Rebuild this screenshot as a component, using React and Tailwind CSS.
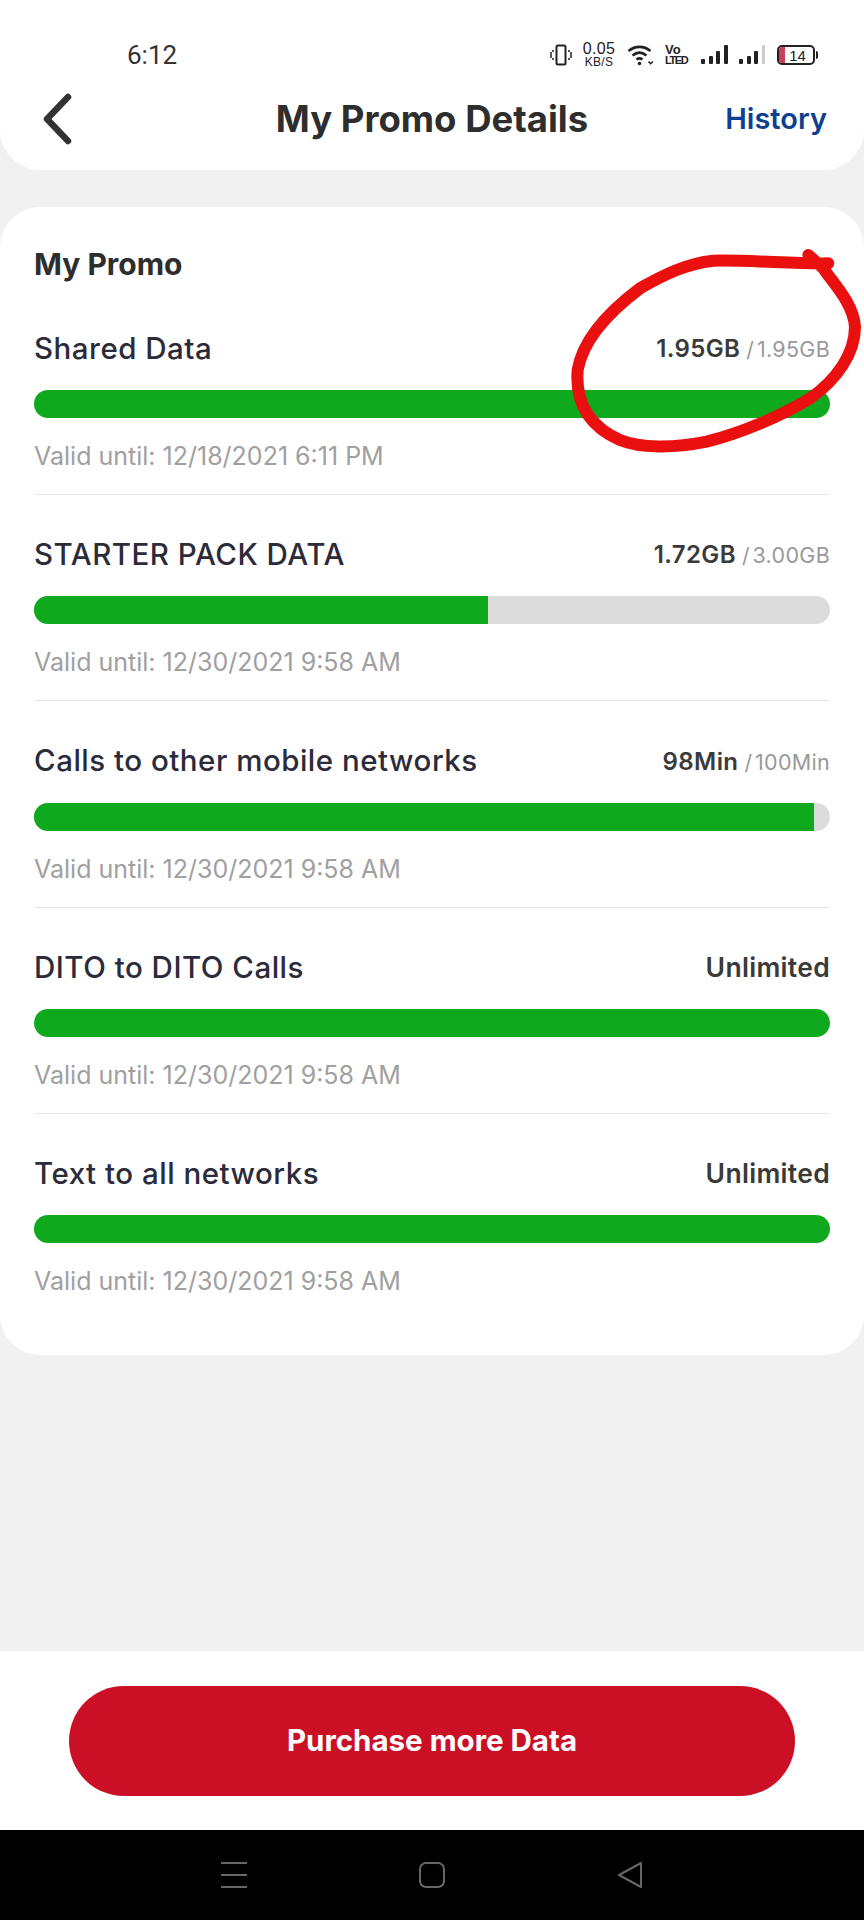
const promos = [
  { name: "Shared Data", used: "1.95GB", total: "1.95GB", pct: 100, valid: "12/18/2021 6:11 PM" },
  { name: "STARTER PACK DATA", used: "1.72GB", total: "3.00GB", pct: 57, valid: "12/30/2021 9:58 AM" },
  { name: "Calls to other mobile networks", used: "98Min", total: "100Min", pct: 98, valid: "12/30/2021 9:58 AM" },
  { name: "DITO to DITO Calls", used: "Unlimited", pct: 100, valid: "12/30/2021 9:58 AM" },
  { name: "Text to all networks", used: "Unlimited", pct: 100, valid: "12/30/2021 9:58 AM" },
];

function Signal({ dim }) {
  return (
    <svg width="27" height="22" viewBox="0 0 27 22" fill="#222">
      <rect x="0" y="15" width="4" height="5" rx="1" />
      <rect x="8" y="12" width="4" height="8" rx="1" />
      <rect x="15" y="7" width="4" height="13" rx="1" />
      <rect x="23" y="1" width={dim ? 3 : 4} height="19" rx="1" fill={dim ? "#ccc" : "#222"} />
    </svg>
  );
}

function StatusIcons() {
  return (
    <div className="flex items-center text-[#222]">
      {/* vibrate */}
      <svg width="22" height="22" viewBox="0 0 22 22" fill="none" stroke="currentColor" className="mr-[10px]">
        <rect x="6.5" y="1.5" width="9" height="19" rx="1.5" strokeWidth="2" />
        <path d="M3 6v2M1 8v6M3 14v2M19 6v2M21 8v6M19 14v2" strokeWidth="1.5" />
      </svg>
      <div className="mr-[11px] flex w-[34px] flex-col items-center font-['Liberation_Sans',sans-serif] leading-none">
        <span className="text-[16px] leading-[15px] tracking-[0.3px]">0.05</span>
        <span className="text-[12px] leading-[13px] tracking-[0.3px]">KB/S</span>
      </div>
      {/* wifi */}
      <svg width="28" height="24" viewBox="0 0 28 24" fill="none" stroke="currentColor" strokeWidth="2.6" className="mr-[10px]">
        <path d="M1.5 8C8 2.5 17 2.5 23.5 8" />
        <path d="M5.5 12.5C10 8.8 15 8.8 19.5 12.5" />
        <path d="M9.5 16.5C11.5 15 13.5 15 15.5 16.5" />
        <circle cx="12.5" cy="20.5" r="1.8" fill="currentColor" stroke="none" />
        <path d="M21.5 18.5l2.2 2.2 2.2-2.2" strokeWidth="1.6" />
      </svg>
      <div className="mr-[12px] flex w-[24px] flex-col font-['Liberation_Sans',sans-serif] font-bold leading-none">
        <span className="text-[13px] leading-[10px]">Vo</span>
        <span className="text-[11px] leading-[11px] tracking-[-1.4px]">LTED</span>
      </div>
      <div className="mr-[11px] flex">
        <Signal />
      </div>
      <div className="mr-[11px] flex">
        <Signal dim />
      </div>
      {/* battery */}
      <div className="flex items-center">
        <div className="relative flex h-[20px] w-[38px] items-center justify-center overflow-hidden rounded-[5px] border-2 border-[#222]">
          <div className="absolute inset-y-0 left-0 w-[6px] bg-[#c8405a]" />
          <span className="relative pl-[3px] font-['Liberation_Sans',sans-serif] text-[15px] font-light leading-none">14</span>
        </div>
        <div className="ml-[1px] h-[8px] w-[2px] rounded-r-sm bg-[#222]" />
      </div>
    </div>
  );
}

function PromoRow({ promo, last }) {
  return (
    <div className={last ? "" : "mb-[41.25px] border-b border-[#e6e6e6] pb-[22px]"}>
      <div className="flex h-[36px] items-center justify-between">
        <span className="text-[29.5px] font-medium tracking-[0.5px] text-[#2b2b3a]">{promo.name}</span>
        {promo.total ? (
          <span className="flex items-baseline pt-[2px]">
            <span className="text-[24px] font-semibold tracking-[0.4px] text-[#3a3a3a]">{promo.used}</span>
            <span className="ml-[6px] mr-[3px] text-[21px] text-[#999]">/</span>
            <span className="text-[21.5px] tracking-[0.3px] text-[#999]">{promo.total}</span>
          </span>
        ) : (
          <span className="pt-[2px] text-[26.5px] font-semibold tracking-[0.3px] text-[#3a3a3a]">{promo.used}</span>
        )}
      </div>
      <div className="mt-[24px] h-[28px] overflow-hidden rounded-full bg-[#dcdcdc]">
        <div className="h-full bg-[#0fa91d]" style={{ width: `${promo.pct}%` }} />
      </div>
      <p className="mt-[22px] h-[32px] text-[25px] leading-[32px] text-[#a0a0a0]">Valid until: {promo.valid}</p>
    </div>
  );
}

export default function App() {
  return (
    <div className="relative flex h-[1920px] w-[864px] flex-col overflow-hidden bg-[#f1f1f1] font-['Inter',sans-serif]">
      {/* status bar + header */}
      <div className="h-[170px] rounded-b-[40px] bg-white">
        <div className="flex h-[70px] items-center justify-between pl-[127px] pr-[46px] pt-[40px]">
          <span className="font-['Roboto',sans-serif] text-[26px] leading-[30px] text-[#333]">6:12</span>
          <StatusIcons />
        </div>
        <div className="relative mt-[14px] flex h-[70px] items-center justify-center">
          <svg
            className="absolute left-[40px]"
            width="36"
            height="52"
            viewBox="0 0 36 52"
            fill="none"
            stroke="#333"
            strokeWidth="6.5"
            strokeLinecap="round"
            strokeLinejoin="round"
          >
            <path d="M28 4L7 26l21 22" />
          </svg>
          <h1 className="text-[36.5px] font-bold text-[#2e2e2e]">My Promo Details</h1>
          <span className="absolute right-[37px] text-[29px] font-semibold text-[#0f3f8f]">History</span>
        </div>
      </div>

      {/* promo card */}
      <div className="mt-[37px] h-[1148px] rounded-[40px] bg-white px-[34px] pt-[39px]">
        <h2 className="mb-[48px] h-[36px] text-[30px] font-bold leading-[36px] text-[#2e2e2e]">My Promo</h2>
        {promos.map((p, i) => (
          <PromoRow key={p.name} promo={p} last={i === promos.length - 1} />
        ))}
      </div>

      <div className="flex-1" />

      {/* bottom action */}
      <div className="flex h-[179px] items-center justify-center bg-white">
        <button className="h-[110px] w-[726px] rounded-full bg-[#cb1025] text-[29.5px] font-bold text-white">
          Purchase more Data
        </button>
      </div>

      {/* android nav */}
      <div className="flex h-[90px] items-center justify-center gap-[172px] bg-black">
        <svg width="26" height="26" viewBox="0 0 26 26" fill="none" stroke="#666" strokeWidth="2">
          <path d="M0 1h26M0 13h26M0 25h26" />
        </svg>
        <svg width="26" height="26" viewBox="0 0 26 26" fill="none" stroke="#666" strokeWidth="2">
          <rect x="1" y="1" width="24" height="24" rx="6" />
        </svg>
        <svg width="26" height="26" viewBox="0 0 26 26" fill="none" stroke="#666" strokeWidth="2" strokeLinejoin="round">
          <path d="M24 1v24L2 13z" />
        </svg>
      </div>

      {/* red marker annotation */}
      <svg
        className="pointer-events-none absolute left-[540px] top-[230px]"
        width="324"
        height="240"
        viewBox="0 0 972 720"
        fill="none"
        stroke="#ea1010"
        strokeWidth="36"
        strokeLinecap="round"
        strokeLinejoin="round"
      >
        <path d="M865 100C760 102 640 90 520 92C440 100 370 135 300 175C220 235 130 320 113 420C105 520 150 590 240 630C300 655 400 655 500 635C600 610 720 560 810 505C890 450 945 370 945 290C940 220 880 160 850 115L805 75" />
      </svg>
    </div>
  );
}
